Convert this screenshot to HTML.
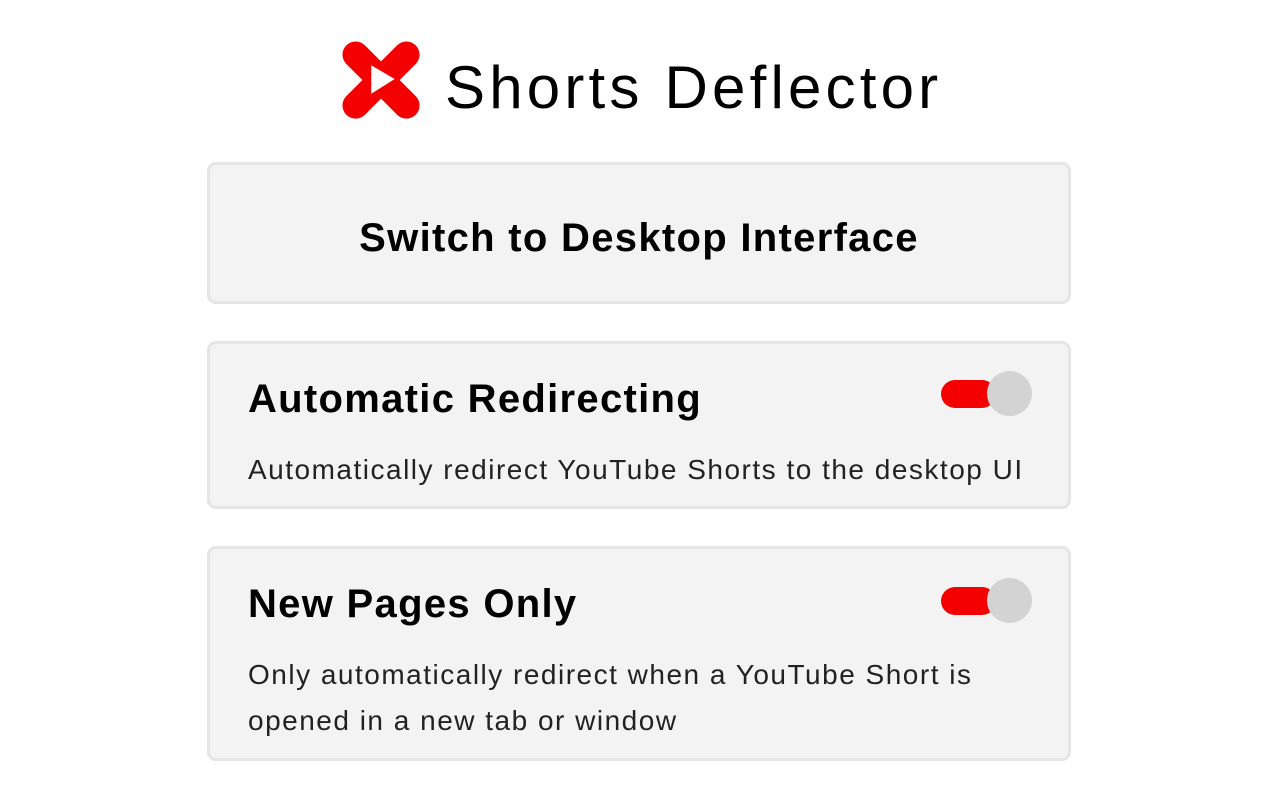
<!DOCTYPE html>
<html><head><meta charset="utf-8"><style>
body{margin:0;width:1280px;height:800px;background:#fff;font-family:"Liberation Sans",sans-serif;color:#000;position:relative;overflow:hidden}
.logo{position:absolute;left:341px;top:40px}
h1{position:absolute;left:445px;top:48px;margin:0;font-size:60px;font-weight:normal;letter-spacing:4.2px;line-height:80px}
.card{position:absolute;left:207px;width:858px;background:#f3f3f3;border:3px solid #e5e5e5;border-radius:9px}
.btn{top:162px;height:136px;display:flex;align-items:center;justify-content:center;font-size:40px;font-weight:bold;letter-spacing:1.3px;padding-top:10px;box-sizing:border-box;height:142px;width:864px}
.h{position:absolute;left:38px;font-size:40px;font-weight:bold;letter-spacing:1.3px}
.d{position:absolute;left:38px;font-size:28px;color:#222;line-height:46px;width:760px;letter-spacing:1.5px}
.tog{position:absolute;left:731px;width:55px;height:28px;background:#f50000;border-radius:14px}
.knob{position:absolute;left:777px;width:45px;height:45px;background:#d3d3d3;border-radius:50%}
</style></head><body>
<svg class="logo" width="82" height="82" viewBox="0 0 84 84">
<path d="M15 15 L67 67 M67 15 L15 67" stroke="#f50000" stroke-width="27" stroke-linecap="round"/>
<polygon points="31,26 31,55 55,40" fill="#fff"/>
</svg>
<h1>Shorts Deflector</h1>
<div class="card btn">Switch to Desktop Interface</div>
<div class="card" style="top:341px;height:162px">
<div class="h" style="top:33px">Automatic Redirecting</div>
<div class="tog" style="top:36px"></div><div class="knob" style="top:27px"></div>
<div class="d" style="top:103px;white-space:nowrap;width:auto">Automatically redirect YouTube Shorts to the desktop UI</div>
</div>
<div class="card" style="top:546px;height:209px">
<div class="h" style="top:33px">New Pages Only</div>
<div class="tog" style="top:38px"></div><div class="knob" style="top:29px"></div>
<div class="d" style="top:103px">Only automatically redirect when a YouTube Short is opened in a new tab or window</div>
</div>
</body></html>
